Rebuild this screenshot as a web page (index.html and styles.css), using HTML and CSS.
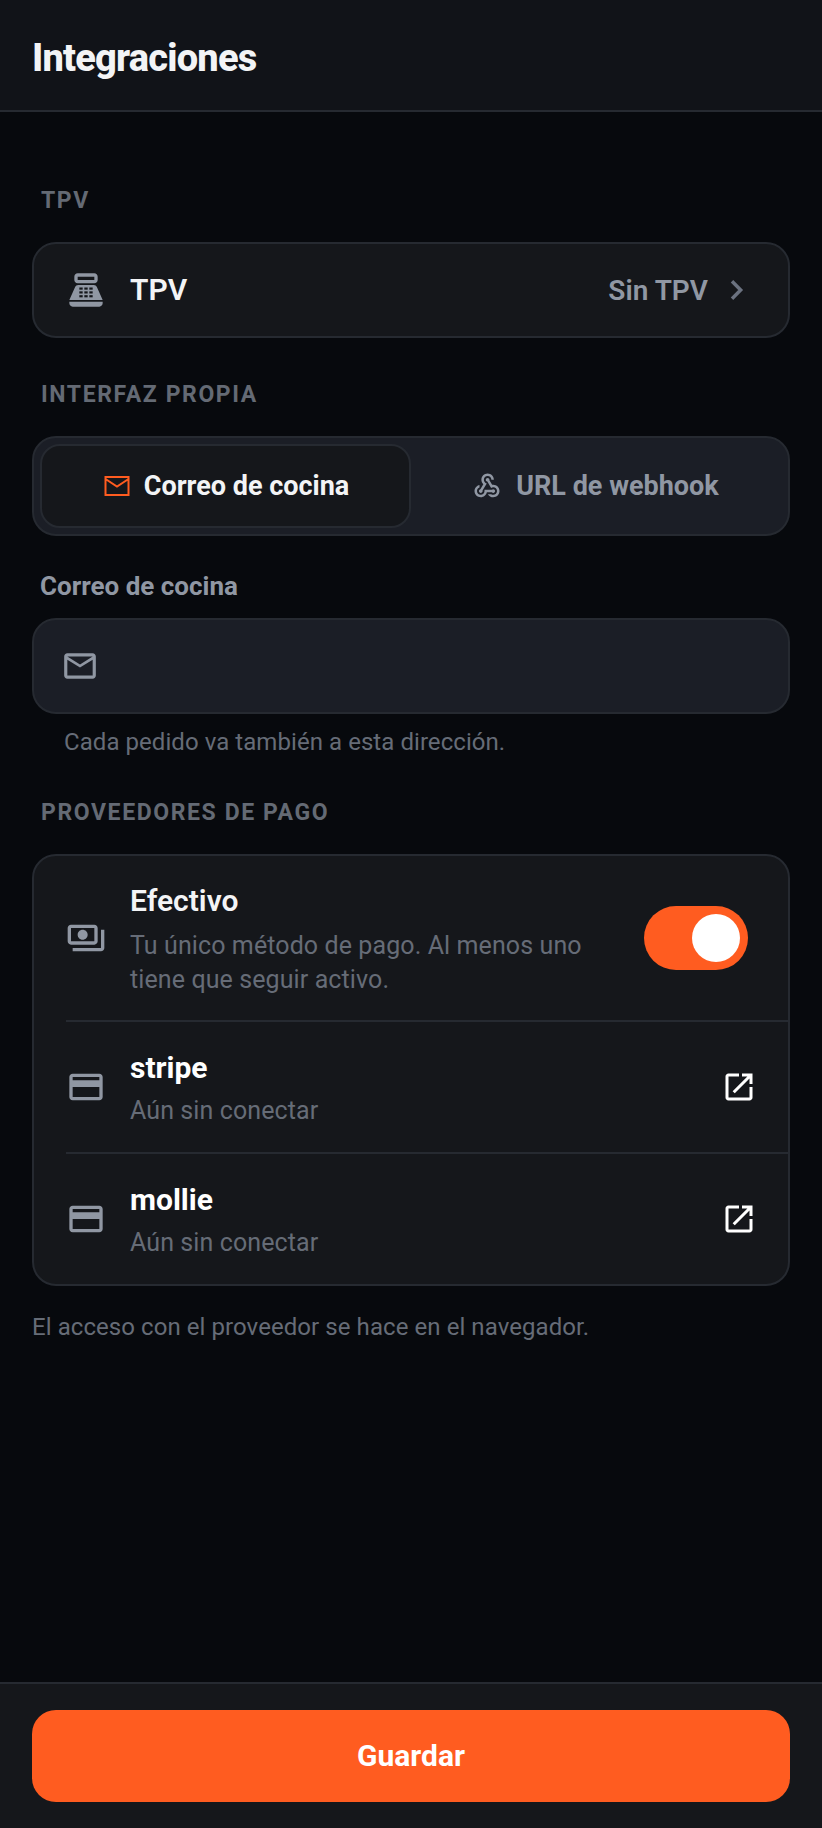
FILE: index.html
```html
<!DOCTYPE html>
<html lang="es">
<head>
  <meta charset="UTF-8" />
  <title>Integraciones</title>
  <link rel="stylesheet" href="styles.css">
</head>
<body>
  <div class="page">
    <header class="topbar">
      <h1>Integraciones</h1>
    </header>

    <main class="content">
      <h2 class="section-label label-tpv">TPV</h2>
      <div class="card tpv-row">
        <svg class="icon icon-lead" viewBox="0 0 24 24">
          <path d="M17 2H7C5.9 2 5 2.9 5 4v2c0 1.1.9 2 2 2h10c1.1 0 2-.9 2-2V4c0-1.1-.9-2-2-2zm0 4H7V4h10v2zM20 22H4c-1.1 0-2-.9-2-2v-1h20v1c0 1.100-.9 2-2 2zM18.530 10.190C18.210 9.470 17.490 9 16.700 9H7.300c-.79 0-1.510.47-1.830 1.190L2 18h20l-3.470-7.810z"/>
          <g class="keys">
            <rect x="8" y="10.500" width="2" height="1.300"/><rect x="11" y="10.500" width="2" height="1.300"/><rect x="14" y="10.500" width="2" height="1.300"/>
            <rect x="8" y="12.800" width="2" height="1.300"/><rect x="11" y="12.800" width="2" height="1.300"/><rect x="14" y="12.800" width="2" height="1.300"/>
            <rect x="8" y="15.100" width="2" height="1.300"/><rect x="11" y="15.100" width="2" height="1.300"/><rect x="14" y="15.100" width="2" height="1.300"/>
          </g>
        </svg>
        <span class="row-title">TPV</span>
        <span class="row-value">Sin TPV</span>
        <svg class="chevron" viewBox="0 0 24 24"><path d="M9 5.500l6.500 6.500L9 18.500"/></svg>
      </div>

      <h2 class="section-label label-own">Interfaz propia</h2>
      <div class="segmented">
        <div class="segment active">
          <svg class="seg-mail" viewBox="0 0 25 20"><path d="M1 1h23v18H1zM1 3l11.500 7.500L24 3"/></svg>
          <span>Correo de cocina</span>
        </div>
        <div class="segment">
          <svg class="icon icon-hook" viewBox="0 0 24 24"><path d="M10 15h5.880c.27-.31.67-.5 1.120-.5.830 0 1.500.67 1.500 1.500s-.67 1.500-1.500 1.500c-.44 0-.84-.19-1.120-.5H11.900c-.46 2.280-2.480 4-4.900 4-2.760 0-5-2.240-5-5 0-2.420 1.720-4.440 4-4.900v2.070c-1.160.41-2 1.530-2 2.830 0 1.650 1.350 3 3 3s3-1.350 3-3v-1zm2.500-11c1.650 0 3 1.350 3 3h2c0-2.760-2.240-5-5-5s-5 2.240-5 5c0 1.430.6 2.710 1.550 3.620l-2.350 3.900c-.68.14-1.200.75-1.200 1.480 0 .83.67 1.500 1.500 1.500s1.500-.67 1.500-1.500c0-.16-.02-.31-.07-.45l3.380-5.630C10.490 9.610 9.500 8.420 9.500 7c0-1.650 1.350-3 3-3zm4.500 9c-.64 0-1.230.2-1.720.54l-3.050-5.070C11.530 8.350 11 7.740 11 7c0-.83.67-1.500 1.500-1.500S14 6.170 14 7c0 .15-.02.29-.06.43l2.190 3.650c.28-.05.57-.08.87-.08 2.760 0 5 2.240 5 5s-2.240 5-5 5c-1.850 0-3.470-1.010-4.330-2.500h2.670c.48.32 1.050.5 1.660.5 1.650 0 3-1.350 3-3s-1.350-3-3-3z"/></svg>
          <span>URL de webhook</span>
        </div>
      </div>

      <label class="field-label" for="kitchenMail">Correo de cocina</label>
      <div class="field">
        <svg class="icon icon-mail" viewBox="0 0 24 24"><path d="M20 4H4c-1.100 0-1.990.9-1.990 2L2 18c0 1.100.9 2 2 2h16c1.100 0 2-.9 2-2V6c0-1.100-.9-2-2-2zm0 14H4V8l8 5 8-5v10zm-8-7L4 6h16l-8 5z"/></svg>
        <input id="kitchenMail" type="email" />
      </div>
      <p class="helper">Cada pedido va también a esta dirección.</p>

      <h2 class="section-label label-pay">Proveedores de pago</h2>
      <div class="card providers">
        <div class="provider provider-cash">
          <svg class="icon icon-lead" viewBox="0 0 24 24"><path d="M19 14V6c0-1.100-.9-2-2-2H3c-1.100 0-2 .9-2 2v8c0 1.100.9 2 2 2h14c1.100 0 2-.9 2-2zm-2 0H3V6h14v8zm-7-7c-1.660 0-3 1.340-3 3s1.340 3 3 3 3-1.340 3-3-1.340-3-3-3zm13 0v11c0 1.100-.9 2-2 2H4v-2h17V7h2z"/></svg>
          <div class="provider-text">
            <div class="row-title">Efectivo</div>
            <div class="provider-sub">Tu único método de pago. Al menos uno tiene que seguir activo.</div>
          </div>
          <div class="toggle"><span class="knob"></span></div>
        </div>
        <div class="provider">
          <svg class="icon icon-lead" viewBox="0 0 24 24"><path d="M20 4H4c-1.110 0-1.990.89-1.990 2L2 18c0 1.110.89 2 2 2h16c1.110 0 2-.89 2-2V6c0-1.110-.89-2-2-2zm0 14H4v-6h16v6zm0-10H4V6h16v2z"/></svg>
          <div class="provider-text">
            <div class="row-title strong">stripe</div>
            <div class="provider-sub">Aún sin conectar</div>
          </div>
          <svg class="icon icon-open" viewBox="0 0 24 24"><path d="M19 19H5V5h7V3H5c-1.110 0-2 .9-2 2v14c0 1.100.89 2 2 2h14c1.100 0 2-.9 2-2v-7h-2v7zM14 3v2h3.590l-9.830 9.830 1.410 1.410L19 6.410V10h2V3h-7z"/></svg>
        </div>
        <div class="provider">
          <svg class="icon icon-lead" viewBox="0 0 24 24"><path d="M20 4H4c-1.110 0-1.990.89-1.990 2L2 18c0 1.110.89 2 2 2h16c1.110 0 2-.89 2-2V6c0-1.110-.89-2-2-2zm0 14H4v-6h16v6zm0-10H4V6h16v2z"/></svg>
          <div class="provider-text">
            <div class="row-title strong">mollie</div>
            <div class="provider-sub">Aún sin conectar</div>
          </div>
          <svg class="icon icon-open" viewBox="0 0 24 24"><path d="M19 19H5V5h7V3H5c-1.110 0-2 .9-2 2v14c0 1.100.89 2 2 2h14c1.100 0 2-.9 2-2v-7h-2v7zM14 3v2h3.590l-9.830 9.830 1.410 1.410L19 6.410V10h2V3h-7z"/></svg>
        </div>
      </div>
      <p class="note">El acceso con el proveedor se hace en el navegador.</p>
    </main>

    <footer class="actions">
      <button type="button" class="save">Guardar</button>
    </footer>
  </div>
</body>
</html>
```
FILE: styles.css
```css
* {
  box-sizing: border-box;
}
body {
  margin: 0;
  background-color: #07090d;
  font-family: Roboto, sans-serif;
  color: #f3f4f6;
}
.page {
  height: 1828px;
  display: flex;
  flex-direction: column;
  overflow: hidden;
}
.topbar {
  height: 112px;
  padding: 6px 32px 0;
  display: flex;
  align-items: center;
  background-color: #111318;
  border-bottom: 2px solid #262a31;
}
.topbar h1 {
  margin: 0;
  font-size: 38px;
  font-weight: 800;
  letter-spacing: -0.8px;
  color: #f3f4f6;
}
.content {
  flex: 1;
  padding: 0 32px;
}
.section-label {
  margin: 0 0 0 9px;
  font-size: 23px;
  line-height: 26px;
  font-weight: 700;
  letter-spacing: 1.6px;
  text-transform: uppercase;
  color: #646a74;
}
.label-tpv {
  margin-top: 76px;
}
.label-own {
  margin-top: 44px;
}
.label-pay {
  margin-top: 43px;
}
.card {
  background-color: #15171b;
  border: 2px solid #262a31;
  border-radius: 24px;
}
.icon {
  flex: none;
  fill: #9097a3;
}
.icon-lead {
  width: 40px;
  height: 40px;
}
.keys {
  fill: #15171b;
}
.tpv-row {
  margin-top: 28px;
  height: 96px;
  padding: 0 36px 0 32px;
  display: flex;
  align-items: center;
}
.row-title {
  font-size: 30px;
  line-height: 36px;
  font-weight: 600;
  color: #f3f4f6;
}
.strong {
  font-weight: 700;
  color: #fff;
}
.tpv-row .row-title {
  margin-left: 24px;
  flex: 1;
}
.row-value {
  font-size: 28px;
  font-weight: 600;
  color: #9097a3;
}
.chevron {
  width: 32px;
  height: 32px;
  margin-left: 12px;
  fill: none;
  stroke: #6b7280;
  stroke-width: 2.600;
}
.segmented {
  margin-top: 28px;
  height: 100px;
  padding: 6px;
  display: flex;
  background-color: #1b1e26;
  border: 2px solid #262a31;
  border-radius: 24px;
}
.segment {
  flex: 1;
  display: flex;
  align-items: center;
  justify-content: center;
  gap: 14px;
  padding-right: 2px;
  font-size: 27px;
  font-weight: 700;
  color: #9097a3;
  border: 2px solid transparent;
  border-radius: 20px;
}
.segment.active {
  padding-left: 2px;
  padding-right: 0;
  background-color: #15171b;
  border-color: #262a31;
  color: #f3f4f6;
}
.seg-mail {
  width: 26px;
  height: 20px;
  fill: none;
  stroke: #ff5c20;
  stroke-width: 2;
}
.icon-hook {
  width: 30px;
  height: 30px;
}
.field-label {
  display: block;
  margin: 34px 0 0 8px;
  font-size: 26px;
  line-height: 32px;
  font-weight: 700;
  color: #9097a3;
}
.field {
  margin-top: 16px;
  height: 96px;
  padding: 0 27px;
  display: flex;
  align-items: center;
  gap: 16px;
  background-color: #1b1e26;
  border: 2px solid #262a31;
  border-radius: 24px;
}
.icon-mail {
  width: 38px;
  height: 38px;
}
.field input {
  flex: 1;
  min-width: 0;
  background: none;
  border: none;
  outline: none;
  font: inherit;
  color: #f3f4f6;
}
.helper {
  margin: 13px 0 0 32px;
  font-size: 24px;
  line-height: 30px;
  letter-spacing: 0.06px;
  color: #666c77;
}
.providers {
  margin-top: 28px;
  overflow: hidden;
}
.provider {
  margin-left: 32px;
  height: 132px;
  padding-right: 31px;
  display: flex;
  align-items: center;
  gap: 24px;
  border-bottom: 2px solid #262a31;
}
.provider:last-child {
  height: 130px;
  border-bottom: none;
}
.provider-cash {
  height: 166px;
  padding-right: 40px;
}
.provider-text {
  flex: 1;
  min-width: 0;
  padding-top: 4px;
}
.provider-sub {
  margin-top: 8px;
  font-size: 25px;
  line-height: 34px;
  letter-spacing: 0.1px;
  color: #666c77;
}
.provider-cash .provider-sub {
  margin-top: 10px;
  max-width: 480px;
}
.toggle {
  flex: none;
  width: 104px;
  height: 64px;
  padding: 8px;
  display: flex;
  justify-content: flex-end;
  background-color: #ff5c20;
  border-radius: 32px;
}
.knob {
  width: 48px;
  height: 48px;
  background-color: #fff;
  border-radius: 50%;
}
.icon-open {
  width: 36px;
  height: 36px;
  fill: #fff;
}
.note {
  margin: 26px 0 0;
  font-size: 24px;
  line-height: 30px;
  letter-spacing: 0.07px;
  color: #666c77;
}
.actions {
  height: 146px;
  padding: 26px 32px 0;
  background-color: #15171b;
  border-top: 2px solid #262a31;
}
.save {
  display: block;
  width: 100%;
  height: 92px;
  padding-bottom: 3px;
  background-color: #ff5c20;
  border: none;
  border-radius: 24px;
  font-family: inherit;
  font-size: 30px;
  font-weight: 700;
  color: #fff;
}
```
